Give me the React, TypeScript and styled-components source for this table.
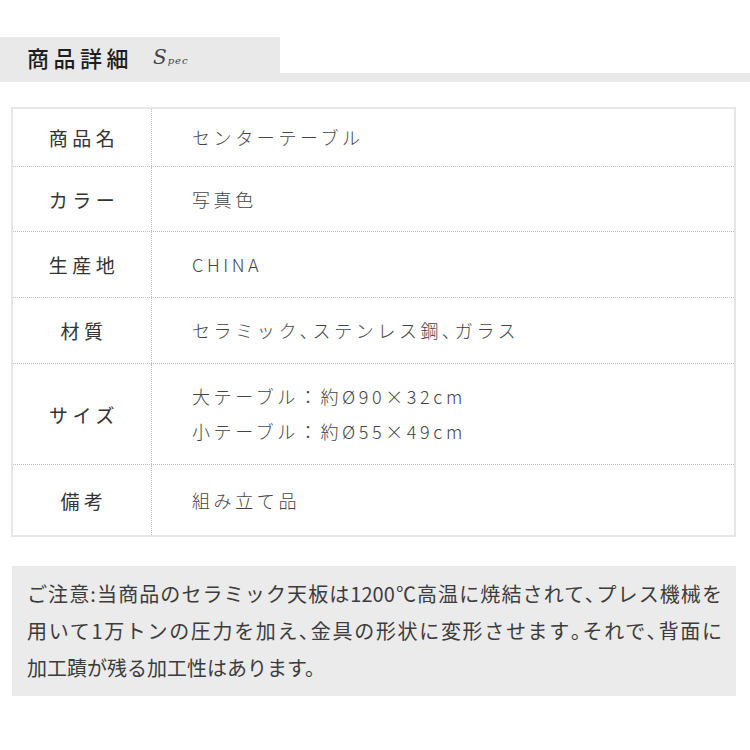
import styled, { createGlobalStyle } from "styled-components";

const GlobalStyle = createGlobalStyle`
  body {
    margin: 0;
    background: #fff;
    font-family: "Noto Sans CJK JP", "Noto Sans", sans-serif;
  }
`;

const Page = styled("div")`
  width: 750px;
  padding-top: 37px;
  padding-bottom: 40px;
`;

const Heading = styled("div")`
  display: flex;
  flex-direction: column;
`;

const TitleBox = styled("div")`
  width: 280px;
  height: 36px;
  background: #e9e9e9;
  display: flex;
  align-items: center;
  padding-left: 27px;
  box-sizing: border-box;
  padding-top: 4px;
`;

const Title = styled("h2")`
  margin: 0;
  font-size: 22px;
  font-weight: 500;
  letter-spacing: 4.5px;
  color: #1e1e1e;
`;

const Sub = styled("span")`
  margin-left: 20px;
  font-family: "DejaVu Serif", "Liberation Serif", serif;
  font-style: italic;
  font-size: 10px;
  color: #444;
  letter-spacing: 1px;

  &::first-letter {
    font-size: 20px;
    font-weight: 300;
  }
`;

const Band = styled("div")`
  height: 9px;
  background: #e9e9e9;
`;

const Table = styled("div")`
  margin: 25px 0 0 11px;
  width: 725px;
  border: 2px solid #e6e6e6;
  box-sizing: border-box;
`;

const Row = styled("div")<{ $h: number; $last?: boolean }>`
  display: grid;
  grid-template-columns: 139px 1fr;
  height: ${(p) => p.$h}px;
  border-bottom: ${(p) => (p.$last ? "none" : "1px dotted #bdbdbd")};
`;

const Label = styled("div")`
  border-right: 1px dotted #bdbdbd;
  display: flex;
  align-items: center;
  justify-content: center;
  font-size: 19px;
  font-weight: 400;
  letter-spacing: 4.5px;
  padding-left: 4px;
  color: #333;
`;

const Value = styled("div")`
  display: flex;
  flex-direction: column;
  justify-content: center;
  padding-left: 40px;
  font-size: 18px;
  font-weight: 300;
  letter-spacing: 3.6px;
  line-height: 35px;
  color: #444;
`;

const Notice = styled("div")`
  margin: 29px 0 0 12px;
  width: 724px;
  box-sizing: border-box;
  background: #ebebeb;
  padding: 9px 14px 10px 15px;
  font-size: 20px;
  line-height: 37px;
  color: #3c3c3c;
`;

const NoticeLine = styled("span")<{ $justify?: boolean }>`
  display: block;
  text-align: justify;
  text-align-last: ${(p) => (p.$justify ? "justify" : "left")};
`;

const rows: { label: string; value: string[]; h: number }[] = [
  { label: "商品名", value: ["センターテーブル"], h: 57 },
  { label: "カラー", value: ["写真色"], h: 64 },
  { label: "生産地", value: ["CHINA"], h: 65 },
  { label: "材質", value: ["セラミック､ステンレス鋼､ガラス"], h: 65 },
  {
    label: "サイズ",
    value: ["大テーブル：約Ø90×32cm", "小テーブル：約Ø55×49cm"],
    h: 100,
  },
  { label: "備考", value: ["組み立て品"], h: 70 },
];

const notice = [
  "ご注意:当商品のセラミック天板は1200℃高温に焼結されて､プレス機械を",
  "用いて1万トンの圧力を加え､金具の形状に変形させます｡それで､背面に",
  "加工蹟が残る加工性はあります。",
];

export default function App() {
  return (
    <Page>
      <GlobalStyle />
      <Heading>
        <TitleBox>
          <Title>商品詳細</Title>
          <Sub>Spec</Sub>
        </TitleBox>
        <Band />
      </Heading>
      <Table>
        {rows.map((r, i) => (
          <Row key={r.label} $h={r.h} $last={i === rows.length - 1}>
            <Label>{r.label}</Label>
            <Value>
              {r.value.map((v) => (
                <span key={v}>{v}</span>
              ))}
            </Value>
          </Row>
        ))}
      </Table>
      <Notice>
        {notice.map((line, i) => (
          <NoticeLine key={i} $justify={i < notice.length - 1}>
            {line}
          </NoticeLine>
        ))}
      </Notice>
    </Page>
  );
}
